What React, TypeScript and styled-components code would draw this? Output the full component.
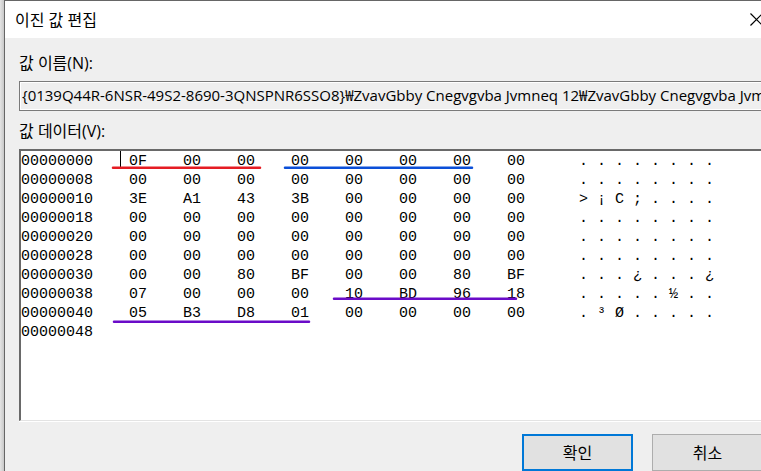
import React from "react";
import styled, { createGlobalStyle } from "styled-components";

const GlobalStyle = createGlobalStyle`
  *, *::before, *::after { box-sizing: border-box; }
  html, body { margin: 0; height: 100%; overflow: hidden; }
  #root { height: 100%; }
  body {
    background: #d6d6d6;
    color: #000;
    font: 16px/20px "Open Sans", "Noto Sans CJK KR", sans-serif;
  }
  button, input { font: inherit; color: inherit; }
`;

const Desktop = styled.main`
  height: 100%;
  padding-left: 4px;
  background: linear-gradient(to right, #e4e4e4 0, #c8c8c8 4px);
  overflow: hidden;
`;

const Dialog = styled.section`
  display: flex;
  flex-direction: column;
  height: 100%;
  width: calc(100% + 20px);
  border: solid #666;
  border-width: 1px 0 0 1px;
  background: #efefef;
`;

const TitleBar = styled.header`
  display: flex;
  align-items: center;
  justify-content: space-between;
  height: 37px;
  padding: 0 18px 0 10px;
  background: #fff;
`;

const Title = styled.h1`
  margin: 0;
  font-size: 16px;
  font-weight: 400;
`;

const CloseButton = styled.button`
  display: flex;
  padding: 0;
  border: 0;
  background: none;
`;

const Form = styled.form`
  display: flex;
  flex: 1;
  flex-direction: column;
  padding: 15px 0 0 14px;
`;

const Label = styled.label`
  display: block;
  height: 28px;
  font-size: 16px;
`;

const NameInput = styled.input`
  width: 100%;
  height: 30px;
  margin-bottom: 10px;
  padding: 0 0 3px 2px;
  border: 1px solid #7a7a7a;
  outline: 0;
  background: #efefef;
  box-shadow: inset 0 0 0 1px #fff;
  font-size: 15px;
`;

const HexEditor = styled.div`
  position: relative;
  flex: 1;
  padding-top: 1px;
  border: 2px solid;
  border-color: #696969 #fff #e3e3e3 #696969;
  border-bottom-width: 1px;
  box-shadow: 0 1px #fff;
  background: #fff;
  overflow: hidden;
`;

const HexTable = styled.table`
  width: 702px;
  table-layout: fixed;
  border-collapse: collapse;
  font: 15px/19px "Liberation Mono", monospace;
`;

const Column = styled.col<{ $chars: number }>`
  width: ${({ $chars }) => $chars * 9}px;
`;

const Offset = styled.th`
  height: 19px;
  padding: 0;
  font-weight: 400;
  text-align: left;
`;

const Cell = styled.td`
  height: 19px;
  padding: 0;
`;

const Marks = styled.svg`
  position: absolute;
  inset: 0;
  width: 100%;
  height: 100%;
  pointer-events: none;
`;

const Actions = styled.footer`
  display: flex;
  justify-content: flex-end;
  gap: 19px;
  padding: 13px 18px 0 0;
`;

const ActionButton = styled.button<{ $primary?: boolean }>`
  width: 111px;
  height: 37px;
  padding: 0;
  border: ${({ $primary }) => ($primary ? "2px solid #0078d7" : "1px solid #adadad")};
  background: #e1e1e1;
`;

const ZERO = "00 00 00 00 00 00 00 00";
const DOTS = "........";

const rows = [
  { offset: "00000000", hex: "0F 00 00 00 00 00 00 00", text: DOTS },
  { offset: "00000008", hex: ZERO, text: DOTS },
  { offset: "00000010", hex: "3E A1 43 3B 00 00 00 00", text: ">¡C;...." },
  { offset: "00000018", hex: ZERO, text: DOTS },
  { offset: "00000020", hex: ZERO, text: DOTS },
  { offset: "00000028", hex: ZERO, text: DOTS },
  { offset: "00000030", hex: "00 00 80 BF 00 00 80 BF", text: "...¿...¿" },
  { offset: "00000038", hex: "07 00 00 00 10 BD 96 18", text: ".....½.." },
  { offset: "00000040", hex: "05 B3 D8 01 00 00 00 00", text: ".³Ø....." },
  { offset: "00000048", hex: "", text: "" },
];

const eight = [0, 1, 2, 3, 4, 5, 6, 7];

export default function App() {
  return (
    <>
      <GlobalStyle />
      <Desktop>
        <Dialog aria-labelledby="dialog-title">
          <TitleBar>
            <Title id="dialog-title">이진 값 편집</Title>
            <CloseButton type="button" aria-label="닫기">
              <svg width="13" height="13" viewBox="0 0 13 13" stroke="#000" strokeWidth="1.200" fill="none">
                <path d="M.5 .5l12 12M12.5 .5l-12 12" />
              </svg>
            </CloseButton>
          </TitleBar>
          <Form onSubmit={(e) => e.preventDefault()}>
            <Label htmlFor="value-name">값 이름(N):</Label>
            <NameInput
              id="value-name"
              readOnly
              value="{0139Q44R-6NSR-49S2-8690-3QNSPNR6SSO8}₩ZvavGbby Cnegvgvba Jvmneq 12₩ZvavGbby Cnegvgvba Jvmneq"
            />
            <Label as="div" id="value-data">값 데이터(V):</Label>
            <HexEditor>
              <HexTable aria-labelledby="value-data">
                <colgroup>
                  <Column $chars={12} />
                  {eight.map((i) => <Column key={i} $chars={6} />)}
                  <Column $chars={2} />
                  {eight.map((i) => <Column key={i} $chars={2} />)}
                </colgroup>
                <tbody>
                  {rows.map((row) => {
                    const bytes = row.hex.split(" ");
                    return (
                      <tr key={row.offset}>
                        <Offset scope="row">{row.offset}</Offset>
                        {eight.map((i) => <Cell key={i}>{bytes[i]}</Cell>)}
                        <Cell />
                        {eight.map((i) => <Cell key={i}>{row.text[i]}</Cell>)}
                      </tr>
                    );
                  })}
                </tbody>
              </HexTable>
              <Marks fill="none" strokeWidth="2" strokeLinecap="round" aria-hidden="true">
                <path d="M99.500 0v16" stroke="#000" strokeWidth="1" strokeLinecap="butt" />
                <path d="M92 16.700H239" stroke="#e51c23" strokeWidth="2.500" />
                <path d="M264 16.700H451" stroke="#0b4fd8" strokeWidth="2.500" />
                <path d="M313 147.700H495" stroke="#6a0bc8" strokeWidth="2.500" />
                <path d="M93 170.700H288" stroke="#6a0bc8" strokeWidth="2.500" />
              </Marks>
            </HexEditor>
            <Actions>
              <ActionButton type="submit" $primary>확인</ActionButton>
              <ActionButton type="button">취소</ActionButton>
            </Actions>
          </Form>
        </Dialog>
      </Desktop>
    </>
  );
}
